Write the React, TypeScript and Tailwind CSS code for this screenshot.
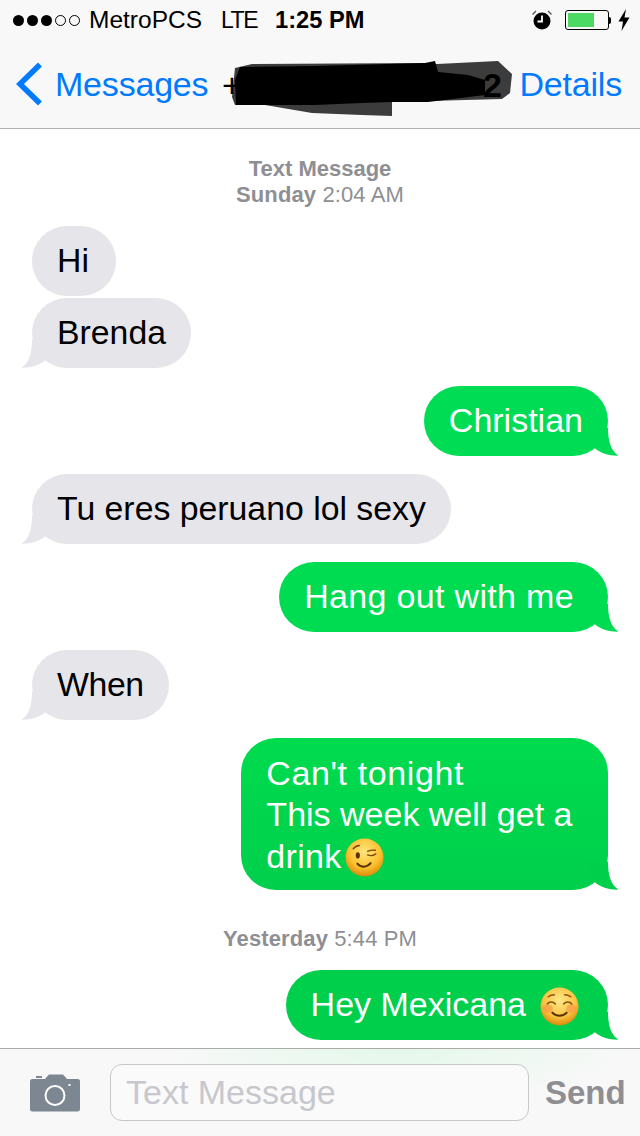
import type { ReactNode } from "react"

function Tail({ side, fill }: { side: "left" | "right"; fill: string }) {
  const pos = side === "left" ? "-left-[11px]" : "-right-[11px] -scale-x-100"
  return (
    <svg className={`absolute bottom-0 ${pos} ${fill}`} width="34" height="30" viewBox="0 0 34 30">
      <path d="M11 2C11 14 8.500 25 0.500 29.600C8 30 17 28 24 22.500L34 0Z" />
    </svg>
  )
}

function Bubble({
  side,
  tail = true,
  color,
  tailFill,
  className = "",
  innerClass = "pb-[15px] pr-[25px] pt-[13px] leading-[42px]",
  children,
}: {
  side: "left" | "right"
  tail?: boolean
  color?: string
  tailFill?: string
  className?: string
  innerClass?: string
  children: ReactNode
}) {
  const isLeft = side === "left"
  return (
    <div className={`flex ${isLeft ? "justify-start" : "justify-end"} ${className}`}>
      <div
        className={`relative rounded-[35px] pl-[25px] ${
          isLeft ? "bg-[#e5e5ea] text-[33.800px] text-black" : `${color} text-[34px] text-white`
        } ${innerClass}`}
      >
        {tail && <Tail side={side} fill={isLeft ? "fill-[#e5e5ea]" : tailFill ?? ""} />}
        <div className="relative">{children}</div>
      </div>
    </div>
  )
}

function WinkEmoji() {
  return (
    <svg className="-my-[3px] ml-[3px] inline-block align-[-6px]" width="39" height="39" viewBox="0 0 38 38">
      <defs>
        <radialGradient id="wink" cx="50%" cy="35%" r="65%">
          <stop offset="0%" stopColor="#ffe680" />
          <stop offset="65%" stopColor="#fbc02d" />
          <stop offset="100%" stopColor="#d98a0b" />
        </radialGradient>
      </defs>
      <circle cx="19" cy="19" r="18.500" fill="url(#wink)" />
      <ellipse cx="12.500" cy="17" rx="2" ry="3" fill="#5b3208" />
      <path d="M8 10.500c1.500-2 3.500-3 6-3.200M22 16.500c2.500 1 5.500 .8 8-1M22 13c2.500-1 5-1.500 7.500-1" fill="none" stroke="#7a4a10" strokeWidth="1.400" strokeLinecap="round" />
      <path d="M12 25c3.500 4 9 4 13-.5" fill="none" stroke="#5b3208" strokeWidth="2" strokeLinecap="round" />
    </svg>
  )
}

function SmileEmoji() {
  return (
    <svg className="-my-[3px] ml-[13px] inline-block align-[-7px]" width="39" height="39" viewBox="0 0 38 38">
      <defs>
        <radialGradient id="smile" cx="50%" cy="35%" r="65%">
          <stop offset="0%" stopColor="#ffe68a" />
          <stop offset="65%" stopColor="#fbc340" />
          <stop offset="100%" stopColor="#d98a0b" />
        </radialGradient>
      </defs>
      <circle cx="19" cy="19" r="18.500" fill="url(#smile)" />
      <ellipse cx="7.500" cy="21" rx="5" ry="4" fill="#f79a4a" opacity="0.7" />
      <ellipse cx="30.500" cy="21" rx="5" ry="4" fill="#f79a4a" opacity="0.7" />
      <path d="M7 16.500c2-2.500 6-2.500 8 0M23 16.500c2-2.500 6-2.500 8 0M8 9.500c2-1.500 4-2 6-2M24 7.500c2 0 4 .5 6 2" fill="none" stroke="#8a5410" strokeWidth="1.500" strokeLinecap="round" />
      <path d="M12 25c3.500 4 10.500 4 14 0" fill="none" stroke="#5b3208" strokeWidth="2" strokeLinecap="round" />
    </svg>
  )
}

function StatusBar() {
  return (
    <div className="flex h-[40px] items-center pl-[13px] pr-[10px] text-black">
      <div className="flex gap-[3px]">
        <span className="h-[11px] w-[11px] rounded-full bg-black" />
        <span className="h-[11px] w-[11px] rounded-full bg-black" />
        <span className="h-[11px] w-[11px] rounded-full bg-black" />
        <span className="h-[11px] w-[11px] rounded-full border border-black" />
        <span className="h-[11px] w-[11px] rounded-full border border-black" />
      </div>
      <div className="flex items-baseline leading-[28px]">
        <span className="ml-[9px] text-[24.500px]">MetroPCS</span>
        <span className="ml-[19px] text-[23px] tracking-[-1.500px]">LTE</span>
        <span className="ml-[18px] text-[23.700px] font-bold">1:25 PM</span>
      </div>
      <div className="ml-auto flex items-center">
        <svg width="22" height="22" viewBox="0 0 22 22">
          <circle cx="11" cy="12" r="8.500" fill="#000" />
          <path d="M11 6.500V12.500H6.500" fill="none" stroke="#fff" strokeWidth="1.800" />
          <path d="M1.500 5.500 5 2M20.500 5.500 17 2" stroke="#555" strokeWidth="1.400" />
        </svg>
        <div className="ml-[12px] flex h-[20px] w-[44px] items-center rounded-[3px] border border-black p-[2px]">
          <div className="h-full w-[26px] bg-[#4cd964]" />
        </div>
        <div className="h-[7px] w-[2px] rounded-r-full bg-black" />
        <svg className="ml-[7px]" width="12" height="22" viewBox="0 0 12 22">
          <path d="M8 0 0.500 12.500H5L3.500 22 11.500 8.500H6.500Z" fill="#000" />
        </svg>
      </div>
    </div>
  )
}

function NavBar() {
  return (
    <div className="relative flex h-[89px] items-center border-b border-[#b2b2b2] text-[34px] text-[#007aff]">
      <svg className="ml-[15px] shrink-0" width="28" height="44" viewBox="0 0 28 44">
        <path d="M25 2.500 5 22 25 41.500" fill="none" stroke="#007aff" strokeWidth="5.500" />
      </svg>
      <span className="ml-[12px] tracking-[-0.2px]">Messages</span>
      <span className="ml-auto mr-[18px] tracking-[-0.2px]">Details</span>
      {/* scribbled out phone number */}
      <span className="absolute left-[222px] top-[20px] text-black">+</span>
      <span className="absolute left-[483px] top-[20px] font-bold text-black">2</span>
      <svg className="absolute left-0 top-[-40px]" width="640" height="129" viewBox="0 0 640 129">
        <path d="M235 68 252 64 425 63 437 64 498 61 512 74 510 93 502 99 392 102V116L362 115 312 113 265 105H235L232 97Z" fill="#000" fillOpacity="0.76" />
        <path d="M240 67 315 66 425 63 435 61 438 72 468 75 485 80V95L428 102 392 102 362 103 315 105 265 105H236L235 80Z" fill="#000" />
      </svg>
    </div>
  )
}

function Stamp({ bold, time, className = "" }: { bold: string; time: string; className?: string }) {
  return (
    <div className={`text-center text-[22px] leading-[26px] tracking-[0.12px] text-[#8e8e93] ${className}`}>
      <span className="font-bold">{bold}</span> {time}
    </div>
  )
}

function CameraIcon() {
  return (
    <svg width="50" height="38" viewBox="0 0 50 38">
      <rect x="6" y="2" width="6" height="2" fill="#7d8791" />
      <path d="M2 5H15L18 1.500C18.500 1 19 .5 20 .5H32C33 .5 33.500 1 34 1.500L37 5H48C49 5 50 6 50 7V35C50 36.500 49 37.500 48 37.500H2C1 37.500 0 36.500 0 35V7C0 6 1 5 2 5Z" fill="#7d8791" />
      <circle cx="25" cy="21.500" r="9.500" fill="none" stroke="#fff" strokeWidth="2" />
      <rect x="38.500" y="10" width="2" height="2" fill="#fff" />
    </svg>
  )
}

function Composer() {
  return (
    <div className="flex h-[88px] shrink-0 items-center border-t border-[#a9aca9] bg-[#f8f8f8] bg-[radial-gradient(ellipse_at_62%_0%,#e4f8ea_0%,#f8f8f8_42%)] pl-[30px]">
      <CameraIcon />
      <div className="ml-[30px] flex h-[57px] w-[419px] items-center rounded-[12px] border border-[#c8c8cc] bg-[#fafafa] pl-[15px] text-[34px] text-[#c7c7cd]">
        Text Message
      </div>
      <span className="ml-[16px] text-[33px] font-bold text-[#8e8e93]">Send</span>
    </div>
  )
}

export default function App() {
  return (
    <div className="flex h-[1136px] w-[640px] flex-col overflow-hidden bg-white font-['Liberation_Sans',Arial,sans-serif]">
      <div className="bg-[#f8f8f8]">
        <StatusBar />
        <NavBar />
      </div>

      <div className="flex-1 overflow-hidden px-[32px] pt-[27px]">
        <div className="text-center text-[22px] font-bold leading-[26px] text-[#8e8e93]">Text Message</div>
        <Stamp bold="Sunday" time="2:04 AM" />

        <Bubble side="left" tail={false} className="mt-[18px]" innerClass="pb-[15px] pr-[27px] pt-[13px] leading-[42px]">
          Hi
        </Bubble>
        <Bubble side="left" className="mt-[2px]">Brenda</Bubble>
        <Bubble side="right" color="bg-[#00dd55]" tailFill="fill-[#00dd55]" className="mt-[18px]">Christian</Bubble>
        <Bubble side="left" className="mt-[18px]">Tu eres peruano lol sexy</Bubble>
        <Bubble
          side="right"
          color="bg-[#00dc52]"
          tailFill="fill-[#00dc52]"
          className="mt-[18px]"
          innerClass="pb-[15px] pr-[34px] pt-[13px] leading-[42px] tracking-[0.33px]"
        >
          Hang out with me
        </Bubble>
        <Bubble side="left" className="mt-[18px]">
          <span className="tracking-[-0.4px]">When</span>
        </Bubble>
        <Bubble
          side="right"
          color="bg-gradient-to-b from-[#00db4e] to-[#00cf4c]"
          tailFill="fill-[#00cf4c]"
          className="mt-[18px]"
          innerClass="pb-[13px] pr-[35.500px] pt-[15px] leading-[41.330px]"
        >
          <span className="tracking-[0.6px]">Can't tonight</span>
          <br />
          This week well get a
          <br />
          <span className="tracking-[0.3px]">drink</span>
          <WinkEmoji />
        </Bubble>

        <Stamp bold="Yesterday" time="5:44 PM" className="mt-[36px]" />

        <Bubble
          side="right"
          color="bg-[#00cf4c]"
          tailFill="fill-[#00cf4c]"
          className="mt-[18px]"
          innerClass="pb-[15px] pr-[29px] pt-[13px] leading-[42px]"
        >
          Hey Mexicana
          <span className="ml-[1px]" />
          <SmileEmoji />
        </Bubble>
      </div>

      <Composer />
    </div>
  )
}
